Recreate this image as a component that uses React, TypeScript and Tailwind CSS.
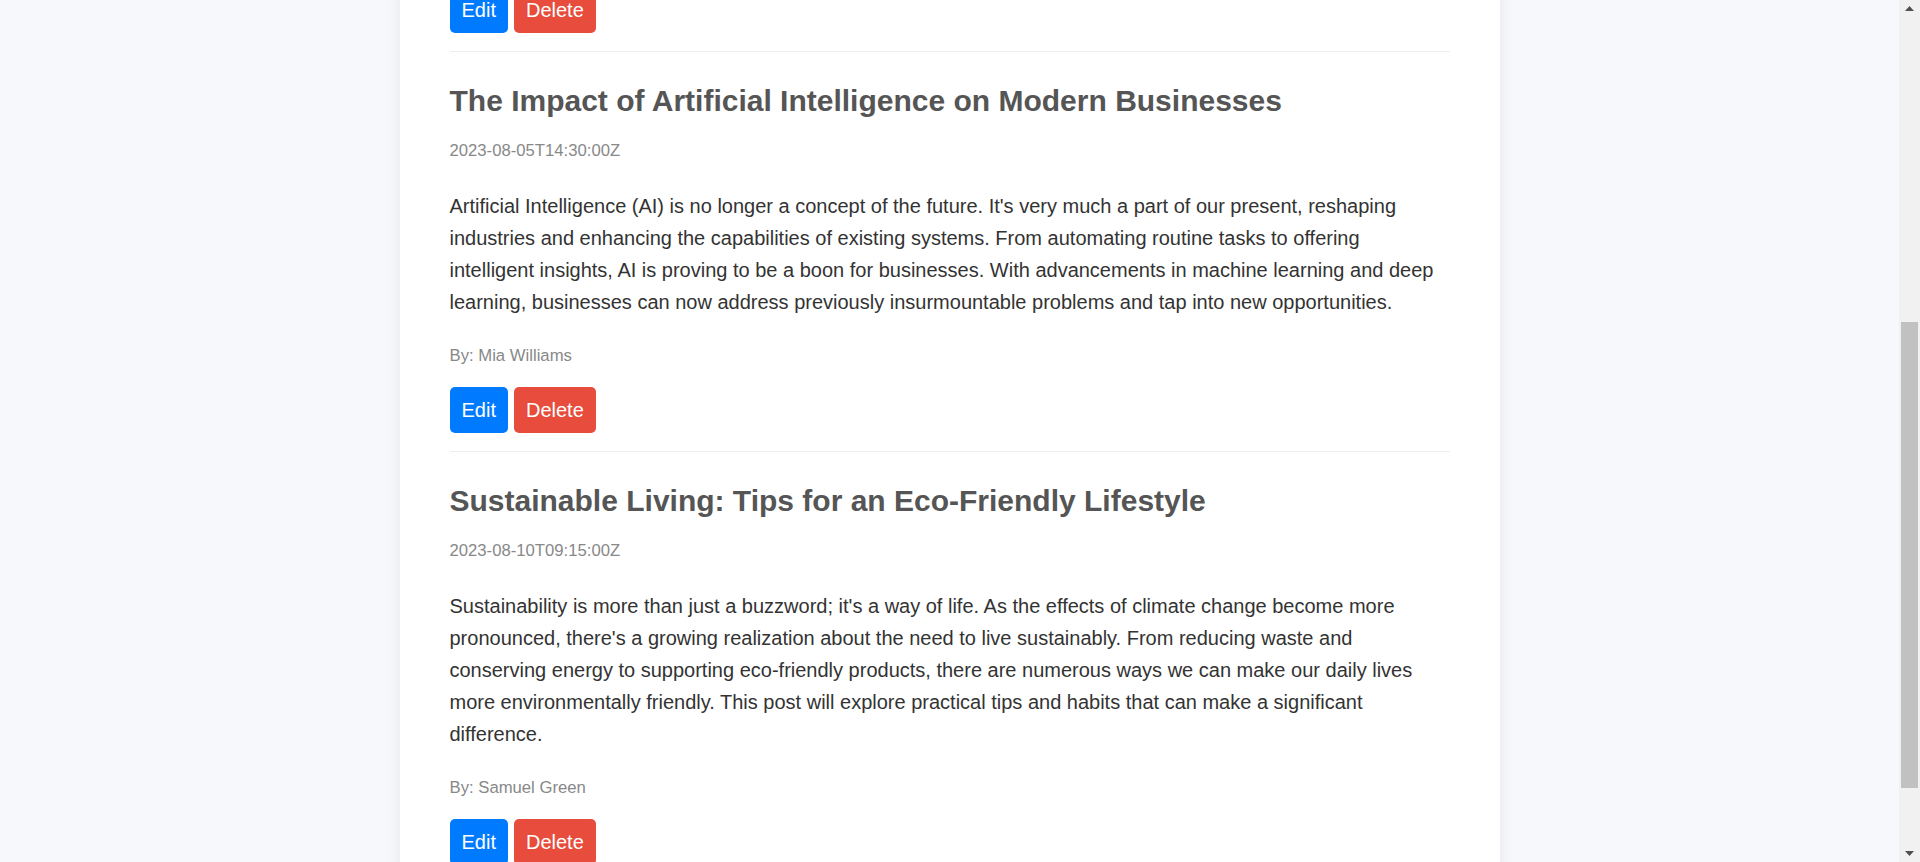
import React from "react";

type Post = {
  title: string;
  date: string;
  body: string;
  author: string;
};

const posts: Post[] = [
  {
    title: "The Impact of Artificial Intelligence on Modern Businesses",
    date: "2023-08-05T14:30:00Z",
    body: "Artificial Intelligence (AI) is no longer a concept of the future. It's very much a part of our present, reshaping industries and enhancing the capabilities of existing systems. From automating routine tasks to offering intelligent insights, AI is proving to be a boon for businesses. With advancements in machine learning and deep learning, businesses can now address previously insurmountable problems and tap into new opportunities.",
    author: "Mia Williams",
  },
  {
    title: "Sustainable Living: Tips for an Eco-Friendly Lifestyle",
    date: "2023-08-10T09:15:00Z",
    body: "Sustainability is more than just a buzzword; it's a way of life. As the effects of climate change become more pronounced, there's a growing realization about the need to live sustainably. From reducing waste and conserving energy to supporting eco-friendly products, there are numerous ways we can make our daily lives more environmentally friendly. This post will explore practical tips and habits that can make a significant difference.",
    author: "Samuel Green",
  },
];

function Buttons() {
  return (
    <div className="flex gap-[6px]">
      <button className="h-[46px] px-[12px] rounded-[5px] bg-[#007bff] text-white text-[20px] leading-[23px] flex items-center">
        Edit
      </button>
      <button className="h-[46px] px-[12px] rounded-[5px] bg-[#e74c3c] text-white text-[20px] leading-[23px] flex items-center">
        Delete
      </button>
    </div>
  );
}

function PostItem({ post }: { post: Post }) {
  return (
    <div className="pt-[33px] pb-[18px] border-b border-[#eeeeee]">
      <h2 className="text-[30px] leading-[32px] font-bold text-[#555555]">{post.title}</h2>
      <div className="mt-[24px] text-[16.7px] leading-[19px] text-[#888888]">{post.date}</div>
      <p className="mt-[30px] text-[20px] leading-[32px] text-[#333333]">{post.body}</p>
      <div className="mt-[28px] text-[16.7px] leading-[19px] text-[#888888]">By: {post.author}</div>
      <div className="mt-[22px]">
        <Buttons />
      </div>
    </div>
  );
}

function Scrollbar() {
  return (
    <div className="w-[21px] h-[862px] bg-[#f1f1f1] flex flex-col shrink-0">
      <div className="h-[17px] flex items-center justify-center">
        <svg width="9" height="5" viewBox="0 0 9 5">
          <polygon points="4.5,0 9,5 0,5" fill="#505050" />
        </svg>
      </div>
      <div className="flex-1 px-[2px]">
        <div className="mt-[305px] h-[466px] bg-[#c1c1c1]" />
      </div>
      <div className="h-[17px] flex items-center justify-center">
        <svg width="9" height="5" viewBox="0 0 9 5">
          <polygon points="0,0 9,0 4.5,5" fill="#505050" />
        </svg>
      </div>
    </div>
  );
}

export default function App() {
  return (
    <div
      className="flex w-full h-[862px] overflow-hidden bg-[#f7f8fc]"
      style={{ fontFamily: '"Liberation Sans", Arial, Helvetica, sans-serif' }}
    >
      <div className="flex-1 h-[862px] overflow-hidden">
        <div className="mx-auto w-[1100px] min-h-[862px] bg-white px-[50px] shadow-[0_0_14px_rgba(0,0,0,0.08)]">
          <div className="-mt-[13px] pb-[18px] border-b border-[#eeeeee]">
            <Buttons />
          </div>
          {posts.map((p) => (
            <PostItem key={p.title} post={p} />
          ))}
        </div>
      </div>
      <Scrollbar />
    </div>
  );
}
